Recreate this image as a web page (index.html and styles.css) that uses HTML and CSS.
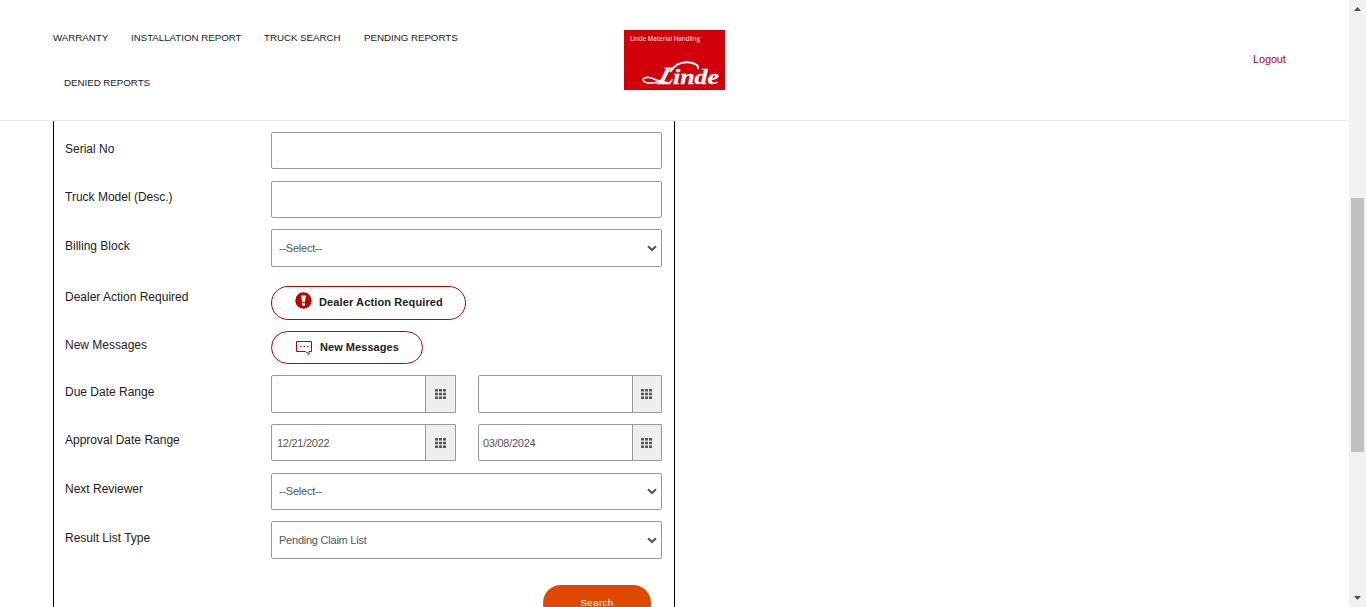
FILE: index.html
```html
<!DOCTYPE html>
<html lang="en">
<head>
<meta charset="utf-8">
<title>Linde Warranty</title>
<link rel="stylesheet" href="styles.css">
</head>
<body>
<svg class="defs" width="0" height="0" aria-hidden="true">
  <symbol id="grid" viewBox="0 0 11 10"><path d="M0 0h3v2.5H0zM4 0h3v2.5H4zM8 0h3v2.5H8zM0 3.8h3v2.4H0zM4 3.8h3v2.4H4zM8 3.8h3v2.4H8zM0 7.5h3V10H0zM4 7.5h3V10H4zM8 7.5h3V10H8z" fill="#555"/></symbol>
  <symbol id="chevron" viewBox="0 0 10 7"><path d="M1 1.2L5 5L9 1.2" fill="none" stroke="#555" stroke-width="2.1"/></symbol>
</svg>
<div class="page">
  <header class="header">
    <nav class="nav">
      <div class="nav-line">
        <a class="nav-warranty">WARRANTY</a>
        <a class="nav-install">INSTALLATION REPORT</a>
        <a class="nav-truck">TRUCK SEARCH</a>
        <a class="nav-pending">PENDING REPORTS</a>
      </div>
      <div class="nav-line nav-second"><a>DENIED REPORTS</a></div>
    </nav>
    <svg class="logo" width="101" height="60" viewBox="0 0 101 60">
      <rect width="101" height="60" fill="#d20008"/>
      <text class="logo-caption" x="6" y="11.2" textLength="70" lengthAdjust="spacingAndGlyphs">Linde Material Handling</text>
      <text class="logo-name logo-initial" transform="translate(33 53.5) skewX(-18)">L</text>
      <text class="logo-name" x="49" y="53.5" textLength="46" lengthAdjust="spacingAndGlyphs">inde</text>
      <path d="M46 42C51 34 59 31.500 66 32.500C72 33.500 75 36 74 39" fill="none" stroke="#fff" stroke-width="1.9"/>
      <path d="M41 47C36 52 31 54 24 53C17 52 18 47 25 47.500C31 48 35 53 44 52.500" fill="none" stroke="#fff" stroke-width="1.7"/>
    </svg>
    <a class="logout">Logout</a>
  </header>
  <main class="panel">
    <div class="row r1"><label>Serial No</label><div class="field"></div></div>
    <div class="row r2"><label>Truck Model (Desc.)</label><div class="field"></div></div>
    <div class="row r3"><label>Billing Block</label><div class="field select tall"><span>--Select--</span><svg width="10" height="7"><use href="#chevron"/></svg></div></div>
    <div class="row r4"><label>Dealer Action Required</label>
      <button class="pill pill-action"><svg width="17" height="17" viewBox="0 0 17 17"><circle cx="8.5" cy="8.5" r="8.2" fill="#c00000"/><path d="M6 3.500h5L9.900 9.800H7.100z" fill="#fff"/><rect x="7" y="10.800" width="3" height="2.800" fill="#fff"/></svg><span>Dealer Action Required</span></button></div>
    <div class="row r5"><label>New Messages</label>
      <button class="pill pill-message"><svg width="17" height="15" viewBox="0 0 17 15"><path d="M.5 1.500h15V11.500h-2.500V14.300L9.500 11.500H.5z" fill="none" stroke="#c00000"/><path d="M4 6.500h1.500M7.500 6.500H9M11 6.500h1.500" stroke="#c00000"/></svg><span>New Messages</span></button></div>
    <div class="row r6"><label>Due Date Range</label>
      <div class="dates">
        <div class="date tall"><span></span><i><svg width="11" height="10"><use href="#grid"/></svg></i></div>
        <div class="date tall"><span></span><i><svg width="11" height="10"><use href="#grid"/></svg></i></div>
      </div></div>
    <div class="row r7"><label>Approval Date Range</label>
      <div class="dates">
        <div class="date"><span>12/21/2022</span><i><svg width="11" height="10"><use href="#grid"/></svg></i></div>
        <div class="date"><span>03/08/2024</span><i><svg width="11" height="10"><use href="#grid"/></svg></i></div>
      </div></div>
    <div class="row r8"><label>Next Reviewer</label><div class="field select"><span>--Select--</span><svg width="10" height="7"><use href="#chevron"/></svg></div></div>
    <div class="row r9"><label>Result List Type</label><div class="field select tall"><span>Pending Claim List</span><svg width="10" height="7"><use href="#chevron"/></svg></div></div>
    <button class="search">Search</button>
  </main>
</div>
<div class="scrollbar">
  <svg width="7" height="4" viewBox="0 0 7 4"><path d="M0 4L3.5 0L7 4z" fill="#505050"/></svg>
  <div class="thumb"></div>
  <svg class="down" width="7" height="4" viewBox="0 0 7 4"><path d="M0 0L3.5 4L7 0z" fill="#505050"/></svg>
</div>
</body>
</html>
```
FILE: styles.css
```css
* { box-sizing: border-box; }
body {
  margin: 0;
  height: 607px;
  display: flex;
  overflow: hidden;
  background: #fff;
  color: #212121;
  font: 12px "Liberation Sans", Arial, sans-serif;
}
.defs { position: absolute; }
.page { width: 1349px; height: 607px; overflow: hidden; display: flex; flex-direction: column; }
.header {
  height: 121px;
  flex: none;
  display: flex;
  border-bottom: 1px solid #e8e8e8;
}
.nav { width: 624px; padding: 30px 0 0 53px; font-size: 9.75px; letter-spacing: -.03px; line-height: 15px; white-space: nowrap; }
.nav-line { display: flex; }
.nav-warranty { width: 78px; }
.nav-install { width: 133px; }
.nav-truck { width: 100px; }
.nav-second { margin: 30px 0 0 11px; }
.logo { margin-top: 30px; flex: none; }
.logo-caption { font: 600 7px "Open Sans", sans-serif; fill: #f9c9cb; }
.logo-name { font: italic bold 22px "Liberation Serif", serif; fill: #fff; stroke: #fff; stroke-width: .3px; }
.logo-initial { font-size: 25px; }
.logout { margin: 51px 0 0 528px; line-height: 16px; font-size: 11px; letter-spacing: -.15px; color: #c00000; }
.panel {
  width: 622px;
  height: 486px;
  margin-left: 53px;
  padding: 11px 12px 0 11px;
  border: solid #000;
  border-width: 0 1px;
}
.row { display: flex; height: 37px; margin-bottom: 12px; }
.row label { width: 206px; flex: none; padding-top: 8px; line-height: 18px; }
.field { width: 391px; height: 37px; border: 1px solid #999; border-radius: 2px; }
.tall { height: 38px !important; }
.select {
  display: flex;
  align-items: center;
  justify-content: space-between;
  padding: 0 4px 0 7px;
  color: #555;
  font-size: 11px;
  letter-spacing: -.23px;
}
.r2 { margin-bottom: 11px; }
.r2 label, .r7 label, .r8 label { padding-top: 7px; }
.r3 { height: 38px; margin-bottom: 19px; }
.r4 { height: 34px; margin-bottom: 11px; }
.r4 label { padding-top: 2px; }
.r5 { height: 33px; margin-bottom: 11px; }
.r5 label { padding-top: 5px; }
.r6 { height: 38px; margin-bottom: 11px; }
.r8 { margin-bottom: 11px; }
.r8 .select span { padding-bottom: 2px; }
.r9 { height: 38px; margin-bottom: 26px; }
.pill {
  display: flex;
  align-items: center;
  border: 1px solid #c00000;
  border-radius: 17px;
  background: #fff;
  color: #212121;
  font: bold 11px "Liberation Sans", Arial, sans-serif;
  letter-spacing: .12px;
  white-space: nowrap;
}
.pill-action { width: 195px; height: 34px; padding: 0 0 4px 23px; gap: 7px; }
.pill-action svg { margin-top: -1px; }
.pill-action span { padding-top: 2px; }
.pill-message { width: 152px; height: 33px; padding: 0 0 0 24px; gap: 7px; letter-spacing: .05px; }
.pill-message span { padding-bottom: 2px; }
.dates { display: flex; gap: 22px; }
.date {
  display: flex;
  width: 185px;
  height: 37px;
  border: 1px solid #999;
  border-radius: 2px 0 0 2px;
  color: #555;
  font-size: 11px;
  letter-spacing: -.27px;
}
.date + .date { width: 184px; }
.date span { flex: 1; padding: 12px 0 0 5px; line-height: 13px; }
.date + .date span { padding-left: 4px; }
.date i {
  width: 30px;
  display: flex;
  align-items: center;
  justify-content: center;
  padding-right: 1px;
  border-left: 1px solid #999;
  background: #eee;
}
.date + .date i { width: 29px; }
.search {
  display: block;
  width: 108px;
  height: 36px;
  margin-left: 478px;
  padding: 0 0 2px;
  border: 0;
  border-radius: 18px;
  background: #e04800;
  color: #fff;
  font: 9.75px "Liberation Sans", Arial, sans-serif;
  letter-spacing: .35px;
}
.scrollbar {
  width: 17px;
  height: 607px;
  background: #f1f1f1;
  display: flex;
  flex-direction: column;
  align-items: center;
  padding: 7px 0 7px;
}
.thumb { width: 13px; height: 254px; margin-top: 187px; background: #c1c1c1; }
.down { margin-top: auto; }
```
